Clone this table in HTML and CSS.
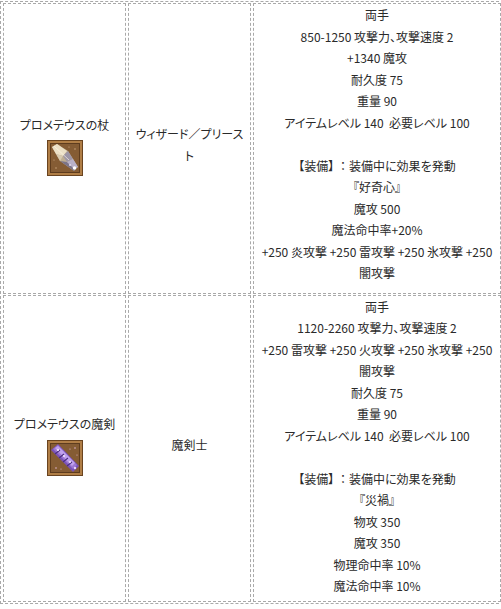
FILE: index.html
```html
<!DOCTYPE html>
<html lang="ja">
<head>
<meta charset="utf-8">
<title>プロメテウス</title>
<link rel="stylesheet" href="styles.css">
</head>
<body>
<table class="items">
  <tr class="row-first">
    <td class="c-name">
      <div class="name">プロメテウスの杖</div>
      <svg class="icon" viewBox="0 0 36 36" width="36" height="36">
        <rect width="36" height="36" fill="#6a4420"/>
        <rect x="1" y="1" width="34" height="34" fill="#b07e46"/>
        <rect x="3" y="3" width="30" height="30" fill="#5e3c1e"/>
        <rect x="4" y="4" width="28" height="28" fill="#855c34"/>
        <circle cx="9" cy="28" r="0.7" fill="#d2ae86"/>
        <circle cx="28" cy="9" r="0.7" fill="#d2ae86"/>
        <circle cx="22" cy="7" r="0.6" fill="#d2ae86"/>
        <circle cx="7" cy="20" r="0.6" fill="#d2ae86"/>
        <path d="M5 7 L10 4 L21 11 L31 27 L27 31 L13 21 Z" fill="#bfae92"/>
        <path d="M5 7 L10 4 L20 11 L16 16 L9 14 Z" fill="#ece0c6"/>
        <path d="M9 14 L16 16 L13 21 Z" fill="#d8cab0"/>
        <path d="M16 16 L21 11 L26 19 L20 22 Z" fill="#9e96a6"/>
        <path d="M13 21 L20 22 L29 28 L27 31 Z" fill="#7c7488"/>
        <path d="M20 22 L26 19 L31 27 L27 29 Z" fill="#b8b0c8"/>
        <path d="M7 6 L22 20" stroke="#fff8e8" stroke-width="0.8" opacity="0.8"/>
        <circle cx="27.5" cy="28" r="1.7" fill="#ffffff"/>
        <circle cx="23" cy="25" r="0.9" fill="#ece4f6"/>
      </svg>
    </td>
    <td class="c-class">ウィザード／プリースト</td>
    <td class="c-desc">両手<br>850-1250 攻撃力、攻撃速度 2<br>+1340 魔攻<br>耐久度 75<br>重量 90<br>アイテムレベル 140&nbsp; 必要レベル 100<br><br>【装備】 <span class="fw">：</span>装備中に効果を発動<br>『好奇心』<br>魔攻 500<br>魔法命中率+20%<br>+250 炎攻撃 +250 雷攻撃 +250 氷攻撃 +250 闇攻撃</td>
  </tr>
  <tr class="row-second">
    <td class="c-name">
      <div class="name">プロメテウスの魔剣</div>
      <svg class="icon" viewBox="0 0 36 36" width="36" height="36">
        <rect width="36" height="36" fill="#6a4420"/>
        <rect x="1" y="1" width="34" height="34" fill="#b07e46"/>
        <rect x="3" y="3" width="30" height="30" fill="#5e3c1e"/>
        <rect x="4" y="4" width="28" height="28" fill="#855c34"/>
        <circle cx="9" cy="28" r="0.8" fill="#e0b4d0"/>
        <circle cx="28" cy="8" r="0.8" fill="#e0b4d0"/>
        <circle cx="23" cy="9" r="0.6" fill="#e0b4d0"/>
        <circle cx="14" cy="29" r="0.6" fill="#e0b4d0"/>
        <circle cx="30" cy="15" r="0.6" fill="#e0b4d0"/>
        <path d="M4 10 L11 4 L32 26 L26 32 Z" fill="#7a52b8"/>
        <path d="M6 9 L11 5 L30 25 L26 29 Z" fill="#9c78d4"/>
        <path d="M8 8 L11 6 L28 23 L25 26 Z" fill="#c0a2ee"/>
        <path d="M8 14 L13 10 M12 18 L17 14 M16 22 L21 18 M20 26 L25 22" stroke="#4a2f80" stroke-width="1.1"/>
        <circle cx="11" cy="10" r="1" fill="#f6ecff"/>
        <circle cx="17" cy="16" r="0.9" fill="#f6ecff"/>
        <circle cx="23" cy="22" r="0.9" fill="#f6ecff"/>
        <circle cx="28" cy="28" r="1.2" fill="#e8d4ff"/>
      </svg>
    </td>
    <td class="c-class">魔剣士</td>
    <td class="c-desc">両手<br>1120-2260 攻撃力、攻撃速度 2<br>+250 雷攻撃 +250 火攻撃 +250 氷攻撃 +250 闇攻撃<br>耐久度 75<br>重量 90<br>アイテムレベル 140&nbsp; 必要レベル 100<br><br>【装備】 <span class="fw">：</span>装備中に効果を発動<br>『災禍』<br>物攻 350<br>魔攻 350<br>物理命中率 10%<br>魔法命中率 10%</td>
  </tr>
</table>
</body>
</html>
```
FILE: styles.css
```css
html, body {
  margin: 0;
  padding: 0;
  background: #ffffff;
}

body {
  font-family: "Noto Sans CJK JP", "Noto Sans", sans-serif;
  font-size: 12px;
  color: #2a2a2a;
  font-feature-settings: "palt";
}

.items {
  box-sizing: border-box;
  width: 504px;
  margin-top: 1px;
  table-layout: fixed;
  border: 1px dashed #a9a9a9;
  border-collapse: separate;
  border-spacing: 2px 1px;
}

.items td {
  box-sizing: border-box;
  border: 1px dashed #a9a9a9;
  text-align: center;
  line-height: 21.5px;
  padding: 0 2px 4px;
}

.c-name,
.c-class {
  width: 123px;
  vertical-align: middle;
}

.items .c-name {
  padding-bottom: 0;
}

.items .c-class {
  padding-bottom: 7px;
}

.c-desc {
  width: 248px;
  vertical-align: top;
}

.row-first .c-desc {
  padding-bottom: 9px;
}

.fw {
  font-feature-settings: normal;
}

.name {
  line-height: 21.5px;
}

.icon {
  display: block;
  width: 36px;
  height: 36px;
  margin: 5px auto 7px;
}
```
